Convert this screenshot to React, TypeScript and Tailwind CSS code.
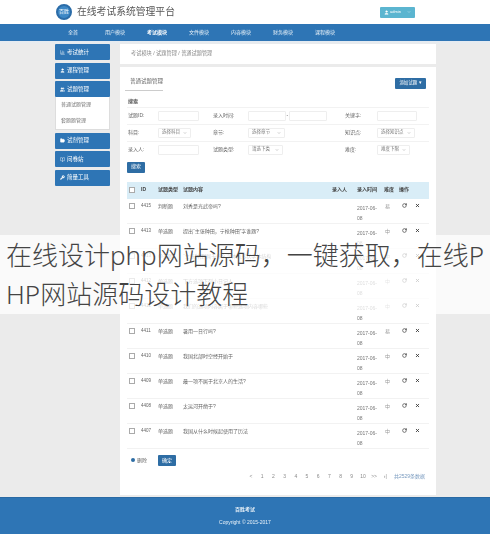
import { BarChart3, BookOpen, ChevronDown, FolderOpen, RotateCw, User, Users, Wrench, X } from "lucide-react";
import type { ReactNode } from "react";

const nav = ["全首", "用户模块", "考试模块", "文件模块", "内容模块", "财务模块", "课程模块"];

const rows = [
  ["4415", "判断题", "刘秀是光武帝吗?", "易"],
  ["4413", "单选题", "提出“主张种田，宁枪种田”字谁题?", "中"],
  ["4413", "单选题", "“主张种田”属于什么字体的形状字体结构", "中"],
  ["4412", "单选题", "下方选项下列小日记人", "中"],
  ["4412", "单选题", "我们的选项内容属于哪些选项内容哪些", "中"],
  ["4411", "单选题", "暑用一日行吗?", "易"],
  ["4410", "单选题", "我国北部时空经开始于", "中"],
  ["4409", "单选题", "最一项不属于北京人的生活?", "中"],
  ["4408", "单选题", "太运河开凿于?", "中"],
  ["4407", "单选题", "我国从什么时候起使用了历法", "中"],
];

function SideItem({ icon, label }: { icon: ReactNode; label: string }) {
  return (
    <div className="flex h-[16px] items-center gap-[2px] rounded-[1px] bg-[#2e75b5] pl-[5px] text-[5.5px] text-white">
      {icon}
      <span>{label}</span>
    </div>
  );
}

function Field({ w, label }: { w: string; label: string }) {
  return (
    <div className={`flex h-[10px] items-center justify-between rounded-[1px] border border-[#eeeeee] px-[3px] text-[4.5px] text-[#777] ${w}`}>
      <span>{label}</span>
      {label && <ChevronDown size={4} />}
    </div>
  );
}

function FormRow({ cells }: { cells: ReactNode[] }) {
  return (
    <div className="grid h-[17px] grid-cols-[30px_55px_35px_97px_32px_1fr] items-center border-t border-[#f2f2f2] pl-[1px] text-[5px] text-[#666]">
      {cells.map((c, i) => (
        <div key={i}>{c}</div>
      ))}
    </div>
  );
}

export default function App() {
  return (
    <div className="relative h-[534px] w-[490px] overflow-hidden bg-[#ebebeb] font-['Liberation_Sans','Noto_Sans_CJK_SC',sans-serif]">
      <div className="flex h-full flex-col blur-[0.45px]">
        <header className="flex h-[24px] shrink-0 items-center justify-between bg-white pl-[56px] pr-[75px]">
          <div className="flex items-center gap-[5px]">
            <div className="flex h-[16px] w-[16px] items-center justify-center rounded-full border-[2px] border-[#2b6ca8] bg-[#3d88c6] text-[5px] text-white">
              百胜
            </div>
            <span className="text-[9.8px] leading-none text-[#555]">在线考试系统管理平台</span>
          </div>
          <div className="flex h-[11px] w-[35px] items-center justify-between rounded-[1px] bg-[#5bb5d0] px-[4px] text-[4px] text-white">
            <span className="flex items-center gap-[1px]">
              <User size={5} fill="white" />
              admin
            </span>
            <ChevronDown size={4} />
          </div>
        </header>

        <nav className="grid h-[17px] shrink-0 grid-cols-[repeat(7,42px)] items-center bg-[#2e75b5] pl-[52px] text-center text-[5px] text-[#e8f1f8]">
          {nav.map((n, i) => (
            <span key={n} className={i === 2 ? "font-bold text-white" : ""}>
              {n}
            </span>
          ))}
        </nav>

        <div className="flex flex-1 items-start gap-[10px] bg-[linear-gradient(#e4ebf2_0,#ebebeb_4px)] pl-[55px] pt-[3px]">
          <aside className="flex w-[55px] flex-col gap-[2.5px]">
            <SideItem icon={<BarChart3 size={5} />} label="考试统计" />
            <SideItem icon={<User size={5} fill="white" />} label="课程管理" />
            <div>
              <SideItem icon={<Users size={5} fill="white" />} label="试题管理" />
              <div className="flex h-[33px] flex-col justify-around border border-t-0 border-[#ddd] bg-white pl-[5px] text-[5px] text-[#777]">
                <span>普通试题管理</span>
                <span>套题题管理</span>
              </div>
            </div>
            <SideItem icon={<FolderOpen size={5} fill="white" />} label="试剂管理" />
            <SideItem icon={<BookOpen size={5} />} label="问卷站" />
            <SideItem icon={<Wrench size={5} fill="white" />} label="简量工具" />
          </aside>

          <main className="flex h-[451px] w-[316px] flex-col gap-[3px]">
            <div className="flex h-[20px] shrink-0 items-center bg-white pl-[11px] text-[5.2px] text-[#888]">
              考试模块 / 试题管理 / 普通试题管理
            </div>
            <section className="flex flex-1 flex-col bg-white px-[7px] pt-[4px]">
              <div className="flex h-[23px] items-start justify-between pt-[6px]">
                <div className="-ml-[2px] border-b border-[#ccc] pb-[5px] pl-[5px] text-[5.5px] text-[#666]">普通试题管理</div>
                <div className="mt-[1px] mr-[3px] flex h-[11px] w-[31px] items-center justify-center rounded-[1px] bg-[#2e6da4] text-[4.5px] text-white">
                  添加试题 ▾
                </div>
              </div>
              <div className="mt-[4px] mb-[1px] pl-[1px] text-[5px] font-bold text-[#555]">搜索</div>
              <FormRow
                cells={[
                  "试题ID:",
                  <Field w="w-[41px]" label="" />,
                  "录入时间:",
                  <div className="flex items-center gap-[0.5px]">
                    <Field w="w-[38px]" label="" />
                    <span>-</span>
                    <Field w="w-[38px]" label="" />
                  </div>,
                  "关键字:",
                  <Field w="w-[40px]" label="" />,
                ]}
              />
              <FormRow
                cells={[
                  "科目:",
                  <Field w="w-[33px]" label="选择科目" />,
                  "章节:",
                  <Field w="w-[37px]" label="选择章节" />,
                  "知识点:",
                  <Field w="w-[38px]" label="选择知识点" />,
                ]}
              />
              <FormRow
                cells={[
                  "录入人:",
                  <Field w="w-[41px]" label="" />,
                  "试题类型:",
                  <Field w="w-[35px]" label="请选下类" />,
                  "难度:",
                  <Field w="w-[33px]" label="难度下限" />,
                ]}
              />
              <div className="mt-[4px] flex h-[11px] w-[18px] items-center justify-center rounded-[1px] bg-[#2e6da4] text-[5px] text-white">
                搜索
              </div>

              <table className="mt-[9px] w-[302px] table-fixed border-collapse text-[5px] text-[#666]">
                <thead>
                  <tr className="h-[17px] bg-[#d9edf7] text-left font-bold text-[#444]">
                    <th className="w-[13px] pl-[2px]">
                      <span className="block h-[6px] w-[6px] border border-[#aaa] bg-white" />
                    </th>
                    <th className="w-[18px] pl-[1px] font-bold">ID</th>
                    <th className="w-[25px] font-bold">试题类型</th>
                    <th className="w-[149px] font-bold">试题内容</th>
                    <th className="w-[25px] font-bold">录入人</th>
                    <th className="w-[27px] font-bold">录入时间</th>
                    <th className="w-[15px] font-bold">难度</th>
                    <th className="font-bold">操作</th>
                  </tr>
                </thead>
                <tbody>
                  {rows.map((r, i) => (
                    <tr key={i} className="h-[24.8px] border-b border-[#f2f2f2] align-top">
                      <td className="pt-[4px] pl-[2px]">
                        <span className="block h-[6px] w-[6px] border border-[#aaa] bg-white" />
                      </td>
                      <td className="pt-[4px] pl-[1px] text-[4.5px]">{r[0]}</td>
                      <td className="pt-[4px]">{r[1]}</td>
                      <td className="truncate pt-[4px]">{r[2]}</td>
                      <td />
                      <td className="pt-[4px] leading-[10px] text-[#777]">
                        2017-06-
                        <br />
                        08
                      </td>
                      <td className="pt-[4px] pl-[1px] text-[#999]">{r[3]}</td>
                      <td className="pt-[4px]">
                        <div className="flex items-center gap-[8px] pl-[3px] text-[#333]">
                          <RotateCw size={5} strokeWidth={3} />
                          <X size={5} strokeWidth={4} />
                        </div>
                      </td>
                    </tr>
                  ))}
                </tbody>
              </table>

              <div className="mt-[6px] flex items-center gap-[11px] pl-[4px] text-[5px] text-[#666]">
                <span className="flex items-center gap-[2px]">
                  <span className="h-[4px] w-[4px] rounded-full bg-[#2e6da4]" />
                  删除
                </span>
                <span className="flex h-[11px] w-[18px] items-center justify-center rounded-[1px] bg-[#2e6da4] text-white">确定</span>
              </div>

              <div className="mt-[7px] flex items-center justify-end pr-[4px] text-[5px] text-[#8a8a8a]">
                {["<", "1", "2", "3", "4", "5", "6", "7", "8", "9", "10", ">>", "›|"].map((p) => (
                  <span key={p} className="w-[11.2px] text-center">
                    {p}
                  </span>
                ))}
                <span className="ml-[3px] text-[#7b9cc0]">共2529条数据</span>
              </div>
            </section>
          </main>
        </div>

        <footer className="flex h-[37px] shrink-0 flex-col items-center justify-center gap-[5px] border-t border-[#2a6aa4] bg-[#2e75b5] text-[5px] text-[#e8f1f8]">
          <span className="font-bold">百胜考试</span>
          <span>Copyright © 2015-2017</span>
        </footer>
      </div>

      <div className="absolute top-[235px] left-0 h-[79px] w-full break-all bg-white/75 pl-[6px] pt-[1px] font-['Noto_Sans','Noto_Sans_CJK_SC',sans-serif] text-[26px] leading-[39px] font-light text-[#444]">
        在线设计php网站源码，一键获取，在线PHP网站源码设计教程
      </div>
    </div>
  );
}
